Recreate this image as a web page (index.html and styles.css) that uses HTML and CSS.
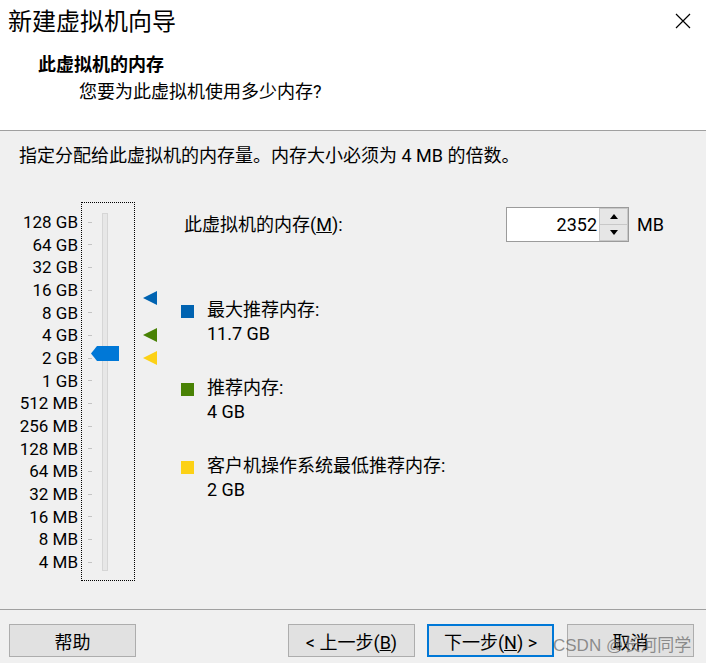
FILE: index.html
```html
<!DOCTYPE html>
<html lang="zh-CN">
<head>
    <meta charset="UTF-8">
    <meta name="viewport" content="width=device-width, initial-scale=1.0">
    <title>新建虚拟机向导</title>
    <link rel="stylesheet" href="styles.css">
</head>
<body>
    <div class="wizard">
        <header class="head">
            <div class="title-row">
                <h1>新建虚拟机向导</h1>
                <svg class="close" width="16" height="16" viewBox="0 0 16 16">
                    <path d="M1 1 L15 15 M15 1 L1 15" stroke="#000" stroke-width="1.2" fill="none"/>
                </svg>
            </div>
            <h2>此虚拟机的内存</h2>
            <p class="lead">您要为此虚拟机使用多少内存?</p>
        </header>

        <main class="content">
            <p class="hint">指定分配给此虚拟机的内存量。内存大小必须为 4 MB 的倍数。</p>

            <div class="memory">
                <ul class="scale-labels">
                    <li>128 GB</li>
                    <li>64 GB</li>
                    <li>32 GB</li>
                    <li>16 GB</li>
                    <li>8 GB</li>
                    <li>4 GB</li>
                    <li>2 GB</li>
                    <li>1 GB</li>
                    <li>512 MB</li>
                    <li>256 MB</li>
                    <li>128 MB</li>
                    <li>64 MB</li>
                    <li>32 MB</li>
                    <li>16 MB</li>
                    <li>8 MB</li>
                    <li>4 MB</li>
                </ul>

                <div class="slider">
                    <div class="ticks">
                        <span></span><span></span><span></span><span></span>
                        <span></span><span></span><span></span><span></span>
                        <span></span><span></span><span></span><span></span>
                        <span></span><span></span><span></span><span></span>
                    </div>
                    <div class="track"></div>
                    <div class="thumb" style="top: 143px"></div>
                </div>

                <div class="markers">
                    <span class="marker max" style="top: 89px"></span>
                    <span class="marker rec" style="top: 126px"></span>
                    <span class="marker min" style="top: 149px"></span>
                </div>

                <div class="panel">
                    <div class="field">
                        <label for="mem">此虚拟机的内存(<u>M</u>):</label>
                        <div class="spin">
                            <input id="mem" type="text" value="2352">
                            <div class="spin-btns">
                                <span class="up"></span>
                                <span class="down"></span>
                            </div>
                        </div>
                        <span class="unit">MB</span>
                    </div>

                    <ul class="legend">
                        <li>
                            <span class="swatch max"></span>
                            <div>最大推荐内存:<br>11.7 GB</div>
                        </li>
                        <li>
                            <span class="swatch rec"></span>
                            <div>推荐内存:<br>4 GB</div>
                        </li>
                        <li>
                            <span class="swatch min"></span>
                            <div>客户机操作系统最低推荐内存:<br>2 GB</div>
                        </li>
                    </ul>
                </div>
            </div>
        </main>

        <footer class="foot">
            <button class="btn help">帮助</button>
            <button class="btn">&lt; 上一步(<u>B</u>)</button>
            <button class="btn primary">下一步(<u>N</u>) &gt;</button>
            <button class="btn">取消</button>
            <span class="watermark">CSDN @长河同学</span>
        </footer>
    </div>
</body>
</html>
```

FILE: styles.css
```css
* {
    margin: 0;
    padding: 0;
    box-sizing: border-box;
}

body {
    background: #f0f0f0;
    color: #000;
    font-family: Roboto, "Noto Sans CJK SC", sans-serif;
    font-size: 18px;
}

.wizard {
    width: 706px;
    height: 663px;
    display: flex;
    flex-direction: column;
    overflow: hidden;
}

/* header */
.head {
    height: 131px;
    background: #fff;
    border-bottom: 1px solid #a0a0a0;
    flex-shrink: 0;
}

.title-row {
    display: flex;
    justify-content: space-between;
    align-items: flex-start;
    padding: 6px 15px 0 8px;
}

.title-row h1 {
    font-size: 24px;
    font-weight: normal;
    line-height: 32px;
}

.close {
    margin-top: 7px;
}

.head h2 {
    font-size: 18px;
    font-weight: bold;
    line-height: 24px;
    margin: 15px 0 0 38px;
}

.lead {
    line-height: 24px;
    margin: 3px 0 0 79px;
}

/* content */
.content {
    flex: 1;
}

.hint {
    line-height: 24px;
    margin: 13px 0 0 19px;
}

.memory {
    display: flex;
    margin-top: 34px;
}

.scale-labels {
    list-style: none;
    width: 78px;
    margin-right: 3px;
    padding-top: 9px;
    text-align: right;
    line-height: 22.67px;
    font-size: 17px;
}

.slider {
    position: relative;
    display: flex;
    align-items: flex-start;
    width: 54px;
    height: 379px;
    border: 1px dotted #000;
    padding-left: 6px;
}

.ticks {
    display: flex;
    flex-direction: column;
    width: 4px;
    padding-top: 8px;
}

.ticks span {
    height: 22.67px;
    display: flex;
    align-items: center;
}

.ticks span::before {
    content: "";
    width: 4px;
    height: 1px;
    background: #c4c4c4;
}

.track {
    width: 6px;
    height: 358px;
    margin: 10px 0 0 10px;
    background: #e7e7e7;
    border: 1px solid #d6d6d6;
}

.thumb {
    position: absolute;
    left: 9px;
    width: 28px;
    height: 15px;
    background: #0078d7;
    clip-path: polygon(6px 0, 100% 0, 100% 100%, 6px 100%, 0 50%);
}

.markers {
    position: relative;
    width: 38px;
    margin-left: 8px;
}

.marker {
    position: absolute;
    left: 0;
    width: 0;
    height: 0;
    border-top: 7px solid transparent;
    border-bottom: 7px solid transparent;
    border-right: 14px solid;
}

.marker.max { border-right-color: #0063b1; }
.marker.rec { border-right-color: #498205; }
.marker.min { border-right-color: #fcd116; }

/* right panel */
.panel {
    flex: 1;
}

.field {
    display: flex;
    align-items: center;
    margin-top: 5px;
}

.field label {
    width: 322px;
    margin-left: 3px;
    margin-top: -3px;
}

.spin {
    display: flex;
    width: 123px;
    height: 35px;
    background: #fff;
    border: 1px solid #9b9b9b;
}

.spin input {
    width: 92px;
    border: none;
    outline: none;
    text-align: right;
    padding-right: 2px;
    font-family: inherit;
    font-size: 18px;
    color: #000;
    background: transparent;
}

.spin-btns {
    display: flex;
    flex-direction: column;
    width: 29px;
}

.spin-btns span {
    flex: 1;
    display: flex;
    align-items: center;
    justify-content: center;
    background: #e6e6e6;
    border: 1px solid #c8c8c8;
}

.spin-btns .up { border-bottom: none; }

.spin-btns span::before {
    content: "";
    width: 0;
    height: 0;
    border-left: 4px solid transparent;
    border-right: 4px solid transparent;
}

.spin-btns .up::before { border-bottom: 5px solid #000; }
.spin-btns .down::before { border-top: 5px solid #000; }

.unit {
    margin-left: 8px;
}

.legend {
    list-style: none;
    margin-top: 56px;
    display: flex;
    flex-direction: column;
    gap: 30px;
}

.legend li {
    display: flex;
    gap: 13px;
    line-height: 24px;
}

.swatch {
    width: 13px;
    height: 13px;
    margin-top: 7px;
    flex-shrink: 0;
}

.swatch.max { background: #0063b1; }
.swatch.rec { background: #498205; }
.swatch.min { background: #fcd116; }

/* footer */
.foot {
    position: relative;
    height: 54px;
    flex-shrink: 0;
    border-top: 1px solid #a0a0a0;
    display: flex;
    align-items: flex-start;
    gap: 12px;
    padding: 14px 12px 0 9px;
}

.btn {
    width: 127px;
    height: 33px;
    background: #e1e1e1;
    border: 1px solid #adadad;
    font-family: inherit;
    font-size: 18px;
    color: #000;
}

.btn.help {
    margin-right: auto;
}

.btn.primary {
    border: 2px solid #0078d7;
    margin-right: 1px;
}

.watermark {
    position: absolute;
    left: 553px;
    top: 21px;
    font-family: "Liberation Sans", "Noto Sans CJK SC", sans-serif;
    font-size: 17px;
    color: rgba(110, 110, 110, 0.75);
    white-space: nowrap;
    pointer-events: none;
}
```
